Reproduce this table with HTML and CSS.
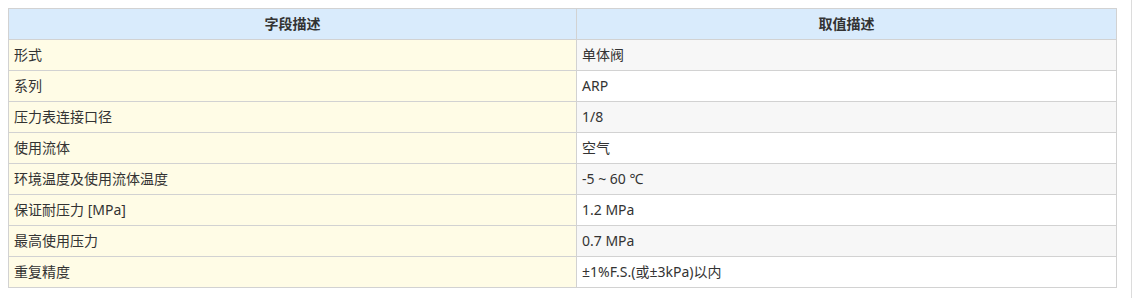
FILE: index.html
```html
<!DOCTYPE html>
<html lang="zh">
<head>
<meta charset="utf-8">
<title>参数表</title>
<link rel="stylesheet" href="styles.css">
</head>
<body>
<div class="edge"></div>
<table class="spec">
  <colgroup>
    <col class="c-name">
    <col class="c-value">
  </colgroup>
  <thead>
    <tr><th>字段描述</th><th>取值描述</th></tr>
  </thead>
  <tbody>
    <tr><td class="name">形式</td><td class="val">单体阀</td></tr>
    <tr><td class="name">系列</td><td class="val">ARP</td></tr>
    <tr><td class="name">压力表连接口径</td><td class="val">1/8</td></tr>
    <tr><td class="name">使用流体</td><td class="val">空气</td></tr>
    <tr><td class="name">环境温度及使用流体温度</td><td class="val">-5 ~ 60 ℃</td></tr>
    <tr><td class="name">保证耐压力 [MPa]</td><td class="val">1.2 MPa</td></tr>
    <tr><td class="name">最高使用压力</td><td class="val">0.7 MPa</td></tr>
    <tr><td class="name">重复精度</td><td class="val">±1%F.S.(或±3kPa)以内</td></tr>
  </tbody>
</table>
</body>
</html>
```
FILE: styles.css
```css
html, body {
  margin: 0;
  padding: 0;
  background: #ffffff;
}
body {
  padding: 8px;
  font-family: "Noto Sans", "Noto Sans CJK SC", sans-serif;
  font-size: 14px;
  color: #333333;
}
.edge {
  position: fixed;
  top: 0;
  right: 0;
  width: 1px;
  height: 100%;
  background: #dcdcdc;
}
.spec {
  border-collapse: collapse;
  table-layout: fixed;
  width: 1108px;
}
.c-name { width: 568px; }
.c-value { width: 540px; }
.spec th,
.spec td {
  border: 1px solid #d2d2d2;
  height: 31px;
  padding: 0 5px;
  box-sizing: border-box;
  line-height: 20px;
  vertical-align: middle;
  white-space: nowrap;
}
.spec th {
  background: #d9ebfc;
  font-weight: bold;
  text-align: center;
  color: #333333;
}
.spec td {
  text-align: left;
}
.spec td.name {
  background: #fffce6;
}
.spec tbody tr:nth-child(odd) td.val {
  background: #f7f7f7;
}
.spec tbody tr:nth-child(even) td.val {
  background: #ffffff;
}
```
